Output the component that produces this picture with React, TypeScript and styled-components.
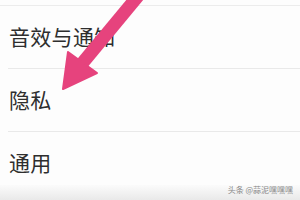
import * as React from 'react';
import styled, { createGlobalStyle } from 'styled-components';

const GlobalStyle = createGlobalStyle`
  html, body {
    margin: 0;
    padding: 0;
    background: #fdfdfd;
  }
  body {
    font-family: "Noto Sans CJK SC", "Noto Sans", sans-serif;
  }
`;

const Screen = styled.div`
  position: relative;
  width: 300px;
  height: 200px;
  overflow: hidden;
  background: #fdfdfd;
  display: flex;
  flex-direction: column;
`;

const PrevRowEdge = styled.div`
  height: 5px;
  border-bottom: 1px solid #ececec;
`;

const Row = styled.div<{ $height: number; $offset?: number; $divider?: boolean }>`
  box-sizing: border-box;
  height: ${({ $height }) => $height}px;
  padding-top: ${({ $offset = 0 }) => $offset}px;
  margin-left: 8px;
  padding-left: 1px;
  display: flex;
  align-items: center;
  border-bottom: ${({ $divider }) => ($divider ? '1px solid #e9e9e9' : 'none')};
`;

const Label = styled.span`
  font-size: 21px;
  line-height: 1;
  color: #2e2e2e;
  letter-spacing: 0.3px;
  margin-bottom: 2px;
`;

const Footer = styled.div`
  flex: 1;
  display: flex;
  justify-content: flex-end;
  align-items: flex-start;
  padding-right: 7px;
  background: linear-gradient(#fbfbfb, #e9e9e9);
`;

const Watermark = styled.span`
  font-size: 8px;
  line-height: 9px;
  color: #888;
`;

const ArrowOverlay = styled.svg`
  position: absolute;
  left: 0;
  top: 0;
  pointer-events: none;
`;

const rows = [
  { label: '音效与通知', height: 63, offset: 0, divider: true },
  { label: '隐私', height: 63, offset: 0, divider: true },
  { label: '通用', height: 53, offset: 9, divider: false },
];

export default function App() {
  return (
    <>
      <GlobalStyle />
      <Screen>
        <PrevRowEdge />
        {rows.map((r) => (
          <Row key={r.label} $height={r.height} $offset={r.offset} $divider={r.divider}>
            <Label>{r.label}</Label>
          </Row>
        ))}
        <Footer>
          <Watermark>头条 @蒜泥嘿嘿嘿</Watermark>
        </Footer>
        <ArrowOverlay width="300" height="200" viewBox="0 0 300 200">
          <line x1="143" y1="-10" x2="80" y2="66" stroke="#e6437d" strokeWidth="13" />
          <polygon points="63,89 68,52 97,73" fill="#e6437d" stroke="#e6437d" strokeWidth="2" strokeLinejoin="round" />
        </ArrowOverlay>
      </Screen>
    </>
  );
}
